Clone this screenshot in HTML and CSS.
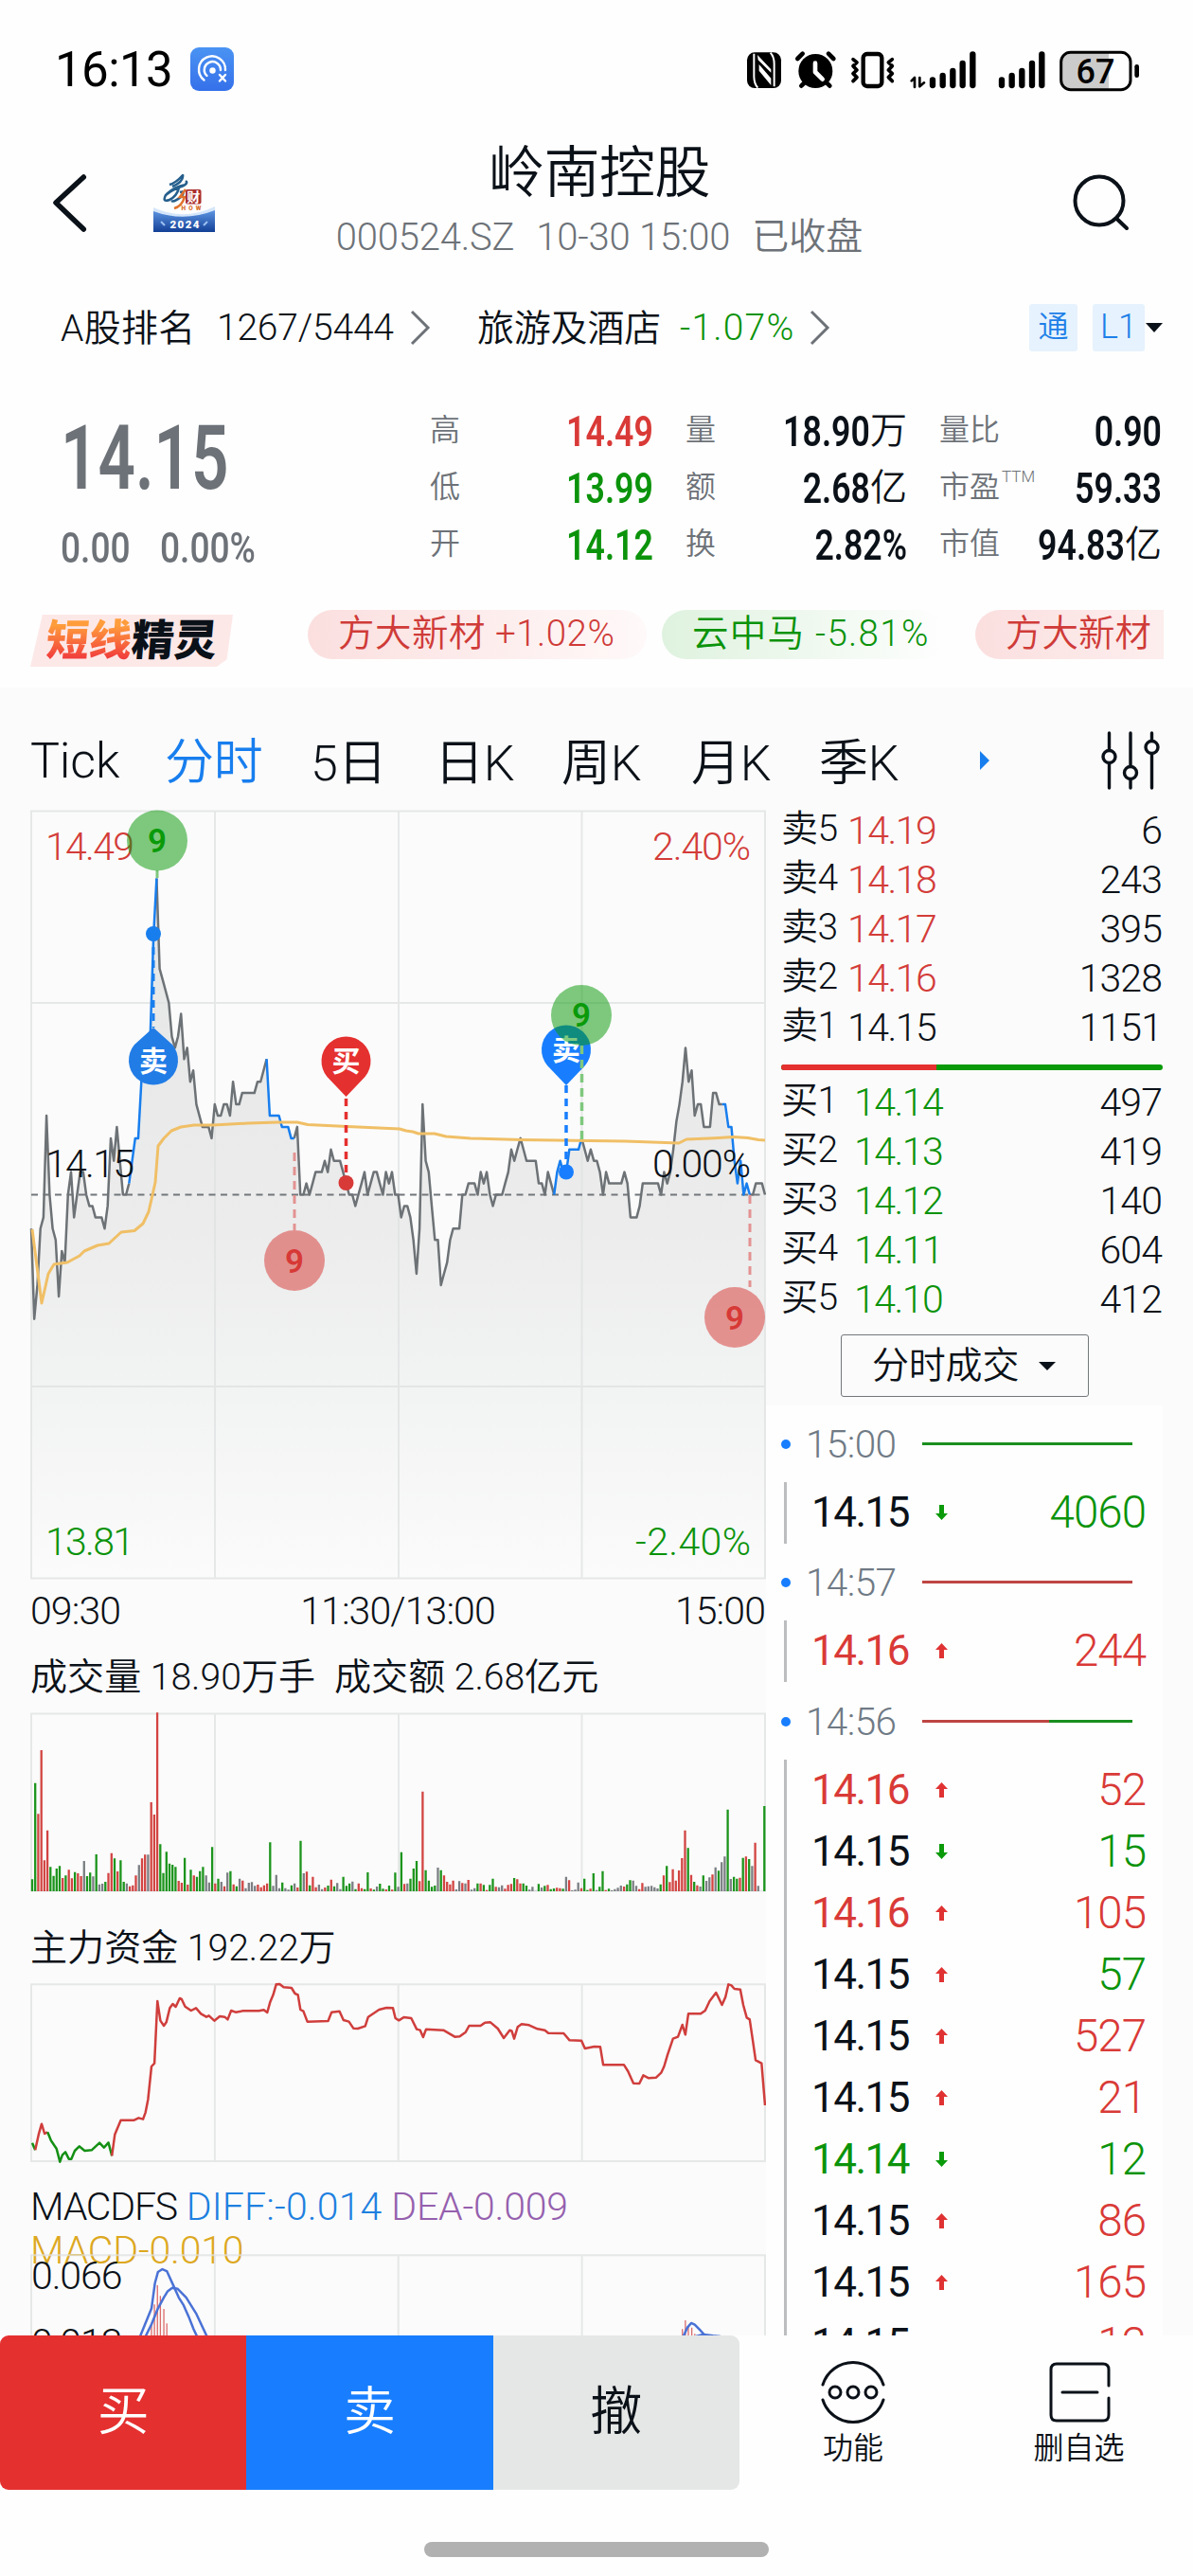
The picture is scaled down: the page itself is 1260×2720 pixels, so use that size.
FILE: index.html
```html
<!DOCTYPE html>
<html lang="zh-CN">
<head>
<meta charset="utf-8">
<title>岭南控股 000524.SZ</title>
<link rel="stylesheet" href="styles.css">
</head>
<body>
<div class="screen">
  <header class="status">
    <div class="status-left">
      <span class="clock">16:13</span>
      <svg class="cast" viewBox="0 0 46 46">
        <defs><linearGradient id="castbg" x1="0" y1="0" x2="0" y2="1"><stop offset="0" stop-color="#4a93f3"/><stop offset="1" stop-color="#3570ea"/></linearGradient></defs>
        <rect width="46" height="46" rx="9" fill="url(#castbg)"/>
        <g fill="none" stroke="#fff" stroke-width="2.4" stroke-linecap="round">
          <path d="M14.5 34.5A14 14 0 1 1 37 24"/>
          <path d="M17.5 30A8.6 8.6 0 1 1 32 24"/>
          <path d="M31 29l6 6.500M37 29l-6 6.500"/>
        </g>
        <circle cx="23.500" cy="24.500" r="3.200" fill="#fff"/>
      </svg>
    </div>
    <svg class="status-icons" viewBox="0 0 1320 210">
      <rect x="27" y="46" width="108" height="113" rx="24"/>
      <path d="M49 50V122Q49 144 61 158M113 154V82Q113 60 101 47" fill="none" stroke="#fefefe" stroke-width="6"/>
      <path d="M60 54L103 100V110L62 70ZM65 84L103 128V150L65 104Z" fill="#fefefe"/>
      <circle cx="244" cy="105" r="54"/>
      <path d="M187 66L203 50M301 66L285 50" stroke="#000" stroke-width="14" stroke-linecap="round"/>
      <path d="M199 152L212 139M289 152L276 139" stroke="#000" stroke-width="14" stroke-linecap="round"/>
      <path d="M243 80V108L266 131" fill="none" stroke="#fefefe" stroke-width="14" stroke-linecap="round" stroke-linejoin="round"/>
      <rect x="395" y="51" width="59" height="102" rx="12" fill="none" stroke="#000" stroke-width="13"/>
      <path d="M363 68L375 78L363 89L375 102L363 113L375 125L363 137M487 68L475 78L487 89L475 102L487 113L475 125L487 137" fill="none" stroke="#000" stroke-width="11" stroke-linecap="round" stroke-linejoin="round"/>
      <path d="M548 136L558 126V156M574 126V154L588 142" fill="none" stroke="#000" stroke-width="8" stroke-linecap="round" stroke-linejoin="round"/>
      <path d="M615 133V150M647 120V150M679 105V150M710 81V150M742 52V150M834 133V150M866 120V150M898 105V150M930 81V150M961 52V150" stroke="#000" stroke-width="19" stroke-linecap="round"/>
      <path d="M1052 46H1173V164H1052Q1022 164 1022 134V76Q1022 46 1052 46Z" fill="#cbcbcb"/>
      <rect x="1022" y="46" width="220" height="118" rx="30" fill="none" stroke="#000" stroke-width="9"/>
      <path d="M1262 91V119" stroke="#000" stroke-width="14" stroke-linecap="round"/>
      <text x="1131" y="143" text-anchor="middle" font-size="108" font-weight="500">67</text>
    </svg>
  </header>

  <div class="titlebar">
    <svg class="back" viewBox="0 0 40 64"><path d="M34.300 5L5 32L34.300 60" fill="none" stroke="#0b1118" stroke-width="5.500" stroke-linecap="round" stroke-linejoin="round"/></svg>
    <svg class="logo" viewBox="0 0 65 61">
      <defs><linearGradient id="lg" x1="0" y1="0" x2="0" y2="1"><stop offset="0" stop-color="#5e95e2"/><stop offset="1" stop-color="#123f96"/></linearGradient></defs>
      <path d="M0 35Q32 50 65 34V61H0Z" fill="#d5e6fa"/>
      <path d="M0 39Q32 51 65 38V61H0Z" fill="url(#lg)"/>
      <path d="M17 11Q24 9 31 1Q32 8 20 13M14 21Q22 13 34 11M34 7Q37 9 32 12Q20 16 13 22Q9 30 17 27Q25 23 27 14M28 19Q34 17 30 23Q22 30 19 28" fill="none" stroke="#255f8d" stroke-width="2.600"/>
      <path d="M34 16L28 24H33Q30 34 22 36" fill="none" stroke="#e0722c" stroke-width="2.600"/>
      <rect x="34" y="16" width="16.500" height="15.500" rx="2" fill="#a92f2d"/>
      <text x="42.200" y="29" text-anchor="middle" font-size="14" fill="#fff">财</text>
      <text x="40" y="37.500" text-anchor="middle" font-size="6.500" font-weight="900" fill="#d8702e" textLength="21">HOW</text>
      <text x="33" y="56.500" text-anchor="middle" font-size="11.500" font-weight="900" fill="#fff" textLength="31">2024</text>
      <path d="M8 50l4 4M57 50l-4 4" stroke="#9bc0f2" stroke-width="2"/>
    </svg>
    <div class="heading">
      <h1>岭南控股</h1>
      <p><span>000524.SZ</span><span>10-30 15:00</span><span class="closed">已收盘</span></p>
    </div>
    <svg class="search" viewBox="0 0 64 64"><g fill="none" stroke="#0b1118" stroke-width="4" stroke-linecap="round"><circle cx="30" cy="30" r="25.500"/><path d="M48.500 49L59 59"/></g></svg>
  </div>

  <div class="ranks">
    <span class="rank-label">A股排名</span><span class="rank-no">1267/5444</span>
    <svg class="chev" viewBox="0 0 22 38"><path d="M2 2L19 19L2 36"/></svg>
    <span class="sector">旅游及酒店</span><span class="rank-chg">-1.07%</span>
    <svg class="chev" viewBox="0 0 22 38"><path d="M2 2L19 19L2 36"/></svg>
    <span class="tag">通</span><span class="tag level">L1</span><i class="caret"></i>
  </div>

  <section class="quote">
    <div class="last">
      <div class="price">14.15</div>
      <div class="change"><span>0.00</span><span>0.00%</span></div>
    </div>
    <dl class="stats">
      <div><dt>高</dt><dd class="up"><b>14.49</b></dd></div>
      <div><dt>量</dt><dd><b>18.90</b>万</dd></div>
      <div><dt>量比</dt><dd><b>0.90</b></dd></div>
      <div><dt>低</dt><dd class="down"><b>13.99</b></dd></div>
      <div><dt>额</dt><dd><b>2.68</b>亿</dd></div>
      <div><dt>市盈<sup>TTM</sup></dt><dd><b>59.33</b></dd></div>
      <div><dt>开</dt><dd class="down"><b>14.12</b></dd></div>
      <div><dt>换</dt><dd><b>2.82%</b></dd></div>
      <div><dt>市值</dt><dd><b>94.83</b>亿</dd></div>
    </dl>
  </section>

  <div class="ticker">
    <div class="badge"><span class="hot">短线</span><span>精灵</span></div>
    <div class="pills">
      <span class="pill red">方大新材 +1.02%</span>
      <span class="pill green">云中马 -5.81%</span>
      <span class="pill red cut">方大新材</span>
    </div>
  </div>

  <main class="board">
    <nav class="tabs">
      <span class="t1">Tick</span><span class="t2 on">分时</span><span class="t3">5日</span><span class="t4">日K</span><span class="t5">周K</span><span class="t6">月K</span><span class="t7">季K</span><i class="more"></i>
      <svg class="sliders" viewBox="0 0 62 62"><g fill="none" stroke="#0b1118" stroke-width="3.400" stroke-linecap="round"><path d="M8.500 2V20M8.500 34V60M31 2V37M31 51V60M53.500 2V10M53.500 24V60"/><circle cx="8.500" cy="27" r="6.500"/><circle cx="31" cy="44" r="6.500"/><circle cx="53.500" cy="17" r="6.500"/></g></svg>
    </nav>
    <div class="columns">
      <div class="charts">
        <svg class="chart price-chart" viewBox="0 0 775 811">
          <defs><linearGradient id="fill" gradientUnits="userSpaceOnUse" x1="0" y1="70" x2="0" y2="811"><stop offset="0" stop-color="#e5e6e6"/><stop offset=".5" stop-color="#ececec"/><stop offset=".7" stop-color="#f1f2f2"/><stop offset="1" stop-color="#fbfbfb"/></linearGradient></defs>
          <path id="area" fill="url(#fill)"/>
          <path class="grid" d="M0 .500H775V810.500H0ZM194 0V811M388 0V811M581.500 0V811M0 203H775M0 608H775"/>
          <path d="M0 405.500H775" stroke="#72777b" stroke-width="2" stroke-dasharray="7 5.500"/>
          <path id="line" class="stroke" stroke="#6d7276"/>
          <path id="hot" class="stroke" stroke="#187eee"/>
          <polyline class="stroke" stroke="#f0bf66" stroke-width="3" points="1,442 11,520 18,489 24,479 38,477 51,470 56,465 70,459 82,457 95,445 109,443.500 118,436 124,423.500 131,392.500 134,354 140,346 148,338 158,334 172,332 192,332 229,330 260,329 281,329 292,331.500 334,333.500 389,336 396,338 403,339 409,341 426,341 438,344 464,346 517,347.500 627,349 684,351 692,347 716,346 742,344.500 757,345.500 768,347.500 775,348"/>
          <g font-size="41">
            <text x="15" y="52" fill="#d33c39" textLength="94">14.49</text><text x="760" y="52" fill="#d33c39" text-anchor="end" textLength="104">2.40%</text>
            <text x="15" y="387" fill="#0b1118" textLength="94">14.15</text><text x="760" y="387" fill="#0b1118" text-anchor="end" textLength="104">0.00%</text>
            <text x="15" y="786" fill="#0b930b" textLength="94">13.81</text><text x="760" y="786" fill="#0b930b" text-anchor="end" textLength="122">-2.40%</text>
          </g>
          <path d="M129 130V229" stroke="#187eee" stroke-width="3" stroke-dasharray="8 6"/>
          <path d="M332.500 302V388" stroke="#e53030" stroke-width="3.500" stroke-dasharray="8 6" stroke-dashoffset="-2"/>
          <path d="M565 290V380" stroke="#187eff" stroke-width="3.500" stroke-dasharray="8 6"/>
          <circle cx="129" cy="130" r="8" fill="#187eee"/><circle cx="332.500" cy="393" r="8" fill="#d83a38"/><circle cx="565" cy="381.500" r="8" fill="#187eff"/>
          <g class="pin">
            <path d="M129 229L149 247A26 26 0 1 1 109 247Z" fill="#217ce6"/><text x="129" y="275">卖</text>
            <path d="M332.500 302L352.500 281A26 26 0 1 0 312.500 281Z" fill="#e53030"/><text x="332.500" y="275">买</text>
            <path d="M565 290L585 269A26 26 0 1 0 545 269Z" fill="#187eff"/><text x="565" y="263">卖</text>
          </g>
          <g stroke="#e39291" stroke-width="3" stroke-dasharray="9 6"><path d="M278 361V443M759 406V503"/></g>
          <path d="M581.500 248V353" stroke="#7fc87e" stroke-width="3.500" stroke-dasharray="9 6"/><path d="M133 63V71" stroke="#7fc87e" stroke-width="3"/>
          <g class="nine">
            <g fill="#0a9a0a"><circle cx="133" cy="31.500" r="32"/><circle cx="581" cy="216" r="32"/><text x="133" y="44">9</text><text x="581" y="228">9</text></g>
            <g fill="#d73936"><circle cx="278" cy="475" r="32"/><circle cx="743" cy="535" r="32"/><text x="278" y="488">9</text><text x="743" y="548">9</text></g>
          </g>
        </svg>
        <div class="axis"><span>09:30</span><span>11:30/13:00</span><span>15:00</span></div>
        <div class="cap vol-cap"><span>成交量 18.90万手</span><span>成交额 2.68亿元</span></div>
        <svg class="chart vol-chart" viewBox="0 0 775 188">
          <path class="grid" d="M0 .500H775V187.500H0ZM194 0V188M388 0V188M581.500 0V188"/>
          <path id="bar-k" stroke="#7b7f83" stroke-width="2.300"/><path id="bar-r" stroke="#d24442" stroke-width="2.300"/><path id="bar-g" stroke="#1c941c" stroke-width="2.300"/>
        </svg>
        <div class="cap fund-cap">主力资金 192.22万</div>
        <svg class="chart fund-chart" viewBox="62 224 1483 561" preserveAspectRatio="none">
          <path class="grid" d="M62 225H1545V785H62ZM433 224V785M804 224V785M1175 224V785"/>
          <g class="stroke wide">
            <polyline stroke="#149014" points="64,727 70,750"/>
            <polyline stroke="#cf3e3c" points="70,750 77,700 83,667 89,698 95,693"/>
            <polyline stroke="#149014" points="95,693 102,720 113,745 120,787 125,765 131,756 138,778 143,778 150,752 159,738 170,752 184,750 200,727 209,742 218,726 225,768"/>
            <polyline stroke="#cf3e3c" points="225,768 231,700 243,655 270,655 279,648 288,652 293,630 298,590 305,485 311,475 317,278 323,340 330,356 335,345 342,300 348,287 354,296 362,269 366,272 373,295 385,308 395,300 405,318 416,328 421,324 432,340 443,326 453,328 459,336 466,308 475,313 490,309 522,309 532,306 539,314 545,280 551,258 557,225 564,224 572,234 588,236 595,254 601,258 606,305 612,310 620,343 662,341 669,313 685,310 693,338 704,343 713,364 722,365 737,357 743,328 765,305 780,299 793,300 798,332 805,339 815,329 830,332 841,367 848,370 854,392 860,367 895,370 918,391 928,390 940,376 947,356 970,356 979,346 990,345 1005,365 1017,395 1029,370 1033,372 1038,397 1045,360 1053,351 1068,354 1085,366 1100,370 1107,379 1138,380 1150,402 1174,403 1181,428 1200,422 1212,423 1218,480 1260,480 1268,500 1279,538 1291,539 1299,513 1310,522 1325,520 1335,505 1341,485 1348,448 1359,397 1369,391 1378,353 1384,384 1390,318 1415,318 1424,308 1433,278 1446,251 1452,270 1458,290 1465,265 1471,225 1477,228 1483,239 1495,241 1501,290 1508,330 1514,336 1520,400 1526,465 1538,475 1545,608"/>
          </g>
        </svg>
        <div class="macd-cap"><span>MACDFS</span> <span class="diff">DIFF:-0.014</span> <span class="dea">DEA-0.009</span><br><span class="macd">MACD-0.010</span></div>
        <div class="macd-box">
          <svg class="chart macd-chart" viewBox="62 271 1483 257" preserveAspectRatio="none">
            <path class="grid" d="M62 540V272H1545V540M433 271V540M804 271V540M1175 271V540"/>
            <path class="thin" stroke="#dd6b6b" d="M305 528V488M311 528V427M317 528V367M323 528V400M330 528V441M336 528V487M1378 528V505M1384 528V477M1390 528V495M1397 528V500M1403 528V520"/>
            <g class="stroke wide" stroke="#4a72d6">
              <polyline points="282,528 305,440 312,360 318,325 327,316 336,322 350,370 360,405 370,430 380,465 390,505 397,528"/>
              <polyline points="293,528 305,490 318,440 330,405 338,385 347,375 358,378 375,405 395,455 417,528"/>
              <polyline points="1380,528 1388,500 1396,486 1403,491 1412,505 1422,522 1428,528"/>
              <polyline points="1405,528 1420,522 1440,526 1455,528"/>
            </g>
          </svg>
          <span class="macd-top">0.066</span><span class="macd-mid">0.013</span>
        </div>
      </div>

      <aside class="side">
        <div class="book">
          <div class="lv up"><span>卖5</span><span>14.19</span><span>6</span></div>
          <div class="lv up"><span>卖4</span><span>14.18</span><span>243</span></div>
          <div class="lv up"><span>卖3</span><span>14.17</span><span>395</span></div>
          <div class="lv up"><span>卖2</span><span>14.16</span><span>1328</span></div>
          <div class="lv"><span>卖1</span><span>14.15</span><span>1151</span></div>
          <div class="ratio"><i></i></div>
          <div class="lv buy down"><span>买1</span><span>14.14</span><span>497</span></div>
          <div class="lv buy down"><span>买2</span><span>14.13</span><span>419</span></div>
          <div class="lv buy down"><span>买3</span><span>14.12</span><span>140</span></div>
          <div class="lv buy down"><span>买4</span><span>14.11</span><span>604</span></div>
          <div class="lv buy down"><span>买5</span><span>14.10</span><span>412</span></div>
        </div>
        <div class="select"><span>分时成交</span><i class="caret"></i></div>
        <div class="trades" id="trades"></div>
      </aside>
    </div>
  </main>

  <footer class="actions">
    <div class="btns"><button class="b-buy">买</button><button class="b-sell">卖</button><button class="b-undo">撤</button></div>
    <div class="act act-fn">
      <svg viewBox="0 0 70 72"><g fill="none" stroke="#0b1118" stroke-width="3" stroke-linecap="round"><path d="M3 28A33.500 33.500 0 0 1 67 28M3 44A33.500 33.500 0 0 0 67 44"/><circle cx="16" cy="36" r="6"/><circle cx="35" cy="36" r="6"/><circle cx="54" cy="36" r="6"/></g></svg>
      <span>功能</span>
    </div>
    <div class="act act-del">
      <svg viewBox="0 0 70 72"><g fill="none" stroke="#0b1118" stroke-width="3" stroke-linecap="round"><path d="M66 29V12Q66 6 60 6H11Q5 6 5 12V60Q5 66 11 66H60Q66 66 66 60V42M17 36H54"/></g></svg>
      <span>删自选</span>
    </div>
  </footer>
  <div class="home"></div>
</div>
<script src="app.js"></script>
</body>
</html>
```
FILE: styles.css
```css
* { box-sizing: border-box; }
body {
  margin: 0;
  background: #fefefe;
  color: #0b1118;
  font-family: Roboto, "Noto Sans CJK SC", sans-serif;
  font-weight: 350;
}
h1, p, dl, dd, dt { margin: 0; font-weight: inherit; }
.screen { width: 1260px; height: 2720px; overflow: hidden; display: flex; flex-direction: column; }
.up { color: #d93a37; }
.down { color: #0b930b; }

/* status bar */
.status { height: 146px; padding: 0 40px 0 58px; display: flex; justify-content: space-between; }
.status-left { display: flex; align-items: center; gap: 19px; color: #000; }
.clock { width: 124px; font-size: 51px; font-weight: 400; letter-spacing: -.6px; white-space: nowrap; }
.cast { width: 46px; height: 46px; }
.status-icons { width: 440px; height: 70px; margin-top: 40px; }

/* title */
.titlebar { height: 148px; padding-left: 54px; display: flex; align-items: flex-start; }
.back { width: 40px; height: 64px; margin-top: 36px; }
.logo { width: 65px; height: 61px; margin: 38px 0 0 68px; font-weight: 700; }
.heading { width: 812px; padding: 2px 0 0; text-align: center; }
.heading h1 { font-size: 59px; line-height: 70px; letter-spacing: -.5px; }
.heading p { display: flex; justify-content: center; gap: 23px; font-size: 40px; letter-spacing: -.2px; line-height: 60px; margin-top: 3px; color: #6d7278; }
.heading .closed { font-size: 39px; letter-spacing: 0; line-height: 58px; }
.search { width: 64px; height: 64px; margin: 36px 0 0 92px; }

/* rank row */
.ranks { height: 104px; padding: 0 32px 0 64px; display: flex; align-items: center; font-size: 39px; white-space: nowrap; }
.rank-label { width: 165px; padding-bottom: 6px; letter-spacing: .3px; }
.rank-no { width: 204px; letter-spacing: -.2px; }
.sector { width: 214px; margin-left: 49px; padding-bottom: 6px; letter-spacing: -.2px; }
.rank-chg { width: 137px; letter-spacing: 1.2px; color: #0b930b; }
.chev { width: 22px; height: 38px; }
.chev path { fill: none; stroke: #6d7278; stroke-width: 3; }
.tag { width: 51px; height: 50px; margin-left: auto; background: #e6f2fd; color: #1e80e8; border-radius: 3px; font-size: 32px; line-height: 48px; text-align: center; }
.level { width: 55px; margin-left: 16px; font-size: 36px; }
.caret { border: 9.5px solid transparent; border-bottom: 0; border-top: 10px solid #0b1118; }
.ranks .caret { margin-left: 1px; }

/* quote */
.quote { height: 230px; display: flex; padding-left: 64px; color: #0b1118; }
.last { width: 391px; color: #6d7278; }
.price { height: 134px; padding-top: 14px; font-size: 94px; font-weight: 600; line-height: 144px; transform: scaleX(.735); transform-origin: left; }
.change { display: flex; gap: 38px; font-size: 45px; line-height: 72px; font-weight: 500; transform: scaleX(.825); transform-origin: left; margin-top: 11px; }
.stats { display: grid; grid-template-columns: 236px 234px 235px; column-gap: 34px; grid-auto-rows: 60px; padding-top: 27px; margin-left: -1px; }
.stats div { display: flex; justify-content: space-between; align-items: center; white-space: nowrap; line-height: 60px; }
.stats dt { font-size: 32px; color: #6d7278; padding-bottom: 2px; }
.stats sup { font-size: 17px; line-height: 0; vertical-align: 16px; margin-left: 2px; }
.stats dd { display: flex; align-items: center; justify-content: flex-end; font-size: 39px; width: 110px; }
.stats b { font-weight: 600; font-size: 43.5px; padding-top: 3px; transform: scaleX(.82); transform-origin: right; }

/* ticker */
.ticker { height: 98px; display: flex; align-items: flex-start; padding: 16px 31px 0 32px; }
.badge { width: 214px; height: 55px; margin-top: 5px; padding-left: 17px; background: #fde8e8; clip-path: polygon(6% 0, 100% 0, 97% 86%, 92% 100%, 0 100%); font-size: 45px; font-weight: 900; line-height: 56px; white-space: nowrap; }
.badge span { display: inline-block; transform: skewX(-5deg); }
.badge .hot { background: linear-gradient(#ff9d3c 20%, #f0383c 85%); -webkit-background-clip: text; background-clip: text; color: transparent; }
.pills { flex: 1; display: flex; margin-left: 79px; overflow: hidden; }
.pill { flex: none; height: 52px; border-radius: 26px; padding-left: 32px; font-size: 38.5px; line-height: 50px; letter-spacing: .5px; white-space: nowrap; }
.pill.red { width: 358px; color: #cf3b38; background: linear-gradient(90deg, #fbdfdf, #fff9f9); }
.pill.green { width: 301px; margin: 0 30px 0 16px; letter-spacing: 1.3px; color: #0b930b; background: linear-gradient(90deg, #dff2df, #fefefe); }
.pill.red.cut { width: 200px; letter-spacing: 0; border-radius: 26px 0 0 26px; background: linear-gradient(90deg, #fbdfdf, #fdeeee); }

/* board */
.board { height: 1740px; overflow: hidden; background: #fbfbfb; }
.tabs { height: 130px; padding: 24px 35px 0 32px; display: flex; align-items: center; font-size: 52px; white-space: nowrap; }
.tabs span { letter-spacing: -.2px; padding-bottom: 3px; }
.tabs .t1 { padding-bottom: 0; }
.tabs .on { color: #187eee; padding-bottom: 6px; }
.t1 { width: 142px; }
.t2 { width: 154px; }
.t3 { width: 131px; }
.t4 { width: 134px; }
.t5 { width: 137px; }
.t6 { width: 135px; }
.t7 { width: 170px; }
.more { border: 10px solid transparent; border-right: 0; border-left: 10px solid #187eee; }
.sliders { width: 62px; height: 62px; margin-left: auto; }
.columns { display: flex; padding-left: 33px; gap: 1px; }
.charts { width: 775px; }
.chart { display: block; width: 775px; overflow: visible; }
.grid { fill: none; stroke: #dfe1e1; stroke-opacity: .75; stroke-width: 2; vector-effect: non-scaling-stroke; }
.stroke { fill: none; stroke-width: 2.5; stroke-linejoin: round; }
polyline.stroke { stroke-width: 3; }
.wide polyline { vector-effect: non-scaling-stroke; }
.thin { stroke-width: 1.3; vector-effect: non-scaling-stroke; }
.price-chart { height: 811px; }
.pin text { font-size: 30px; font-weight: 700; fill: #fff; text-anchor: middle; }
.nine circle { opacity: .52; }
.nine text { font-size: 35px; font-weight: 600; text-anchor: middle; }
.axis { height: 66px; margin: 0 0 0 -1px; display: flex; justify-content: space-between; align-items: center; font-size: 41px; letter-spacing: -.9px; padding-top: 2px; }
.cap { font-size: 39.1px; white-space: pre; display: flex; align-items: center; margin-left: -1px; }
.vol-cap { height: 76px; padding-bottom: 8px; gap: 20px; }
.vol-chart { height: 188px; }
.fund-cap { height: 98px; padding-top: 14px; }
.fund-chart { height: 187px; }
.macd-cap { height: 98.5px; padding-top: 25px; margin-left: -1px; font-size: 41px; line-height: 46px; letter-spacing: -.2px; white-space: nowrap; position: relative; }
.macd-cap span:first-child { letter-spacing: -1.2px; }
.diff { color: #1e80e0; letter-spacing: .15px; }
.dea { color: #9560ae; }
.macd { color: #dda81f; }
.macd-box { position: relative; font-size: 41px; letter-spacing: -1.1px; line-height: 46px; }
.macd-chart { height: 86px; }
.macd-top { position: absolute; left: 0; top: -1px; }
.macd-mid { position: absolute; left: 0; top: 70px; }

/* order book */
.side { width: 419px; margin-top: -5px; }
.book { padding-left: 17px; }
.lv { height: 52px; display: grid; grid-template-columns: 70px 1fr auto; align-items: center; font-size: 41px; line-height: 48px; letter-spacing: -1.5px; color: #0b1118; padding-bottom: 1px; margin-left: -1px; }
.lv.buy { grid-template-columns: 77px 1fr auto; }
.lv span:first-child { font-size: 39px; letter-spacing: -.6px; line-height: 44px; padding-bottom: 4px; }
.lv span:last-child { letter-spacing: -.9px; padding-right: 1px; }
.lv.up span:nth-child(2) { color: #d33c39; }
.lv.down span:nth-child(2) { color: #0b930b; }
.ratio { height: 6px; margin: 13px 0 8.500px -1px; border-radius: 3px; background: #089a08; overflow: hidden; }
.ratio i { display: block; width: 164px; height: 6px; background: #e53030; }
.select { width: 262px; height: 66px; margin: 10.500px 0 9px 79px; border: 1.500px solid #72777b; border-radius: 3px; display: flex; align-items: center; padding-left: 32px; gap: 21px; font-size: 39px; letter-spacing: -.2px; }
.select span { padding-bottom: 8px; }
.select .caret { border-top-width: 9px; }
.trades { height: 1000px; background: #fefefe; }
.minute { height: 81px; padding: 0 32px 0 16px; display: flex; align-items: center; font-size: 40.5px; letter-spacing: -.6px; color: #6f7a85; }
.minute:nth-of-type(5) { margin-top: 1px; }
.minute::before { content: ""; width: 10px; height: 10px; margin-right: 16px; border-radius: 50%; background: #187eff; }
.minute span { width: 123px; }
.minute .flow { flex: 1; height: 3px; display: flex; background: #1a8f1f; }
.flow i { background: #bd4643; }
.trade { height: 65px; margin-left: 19px; border-left: 3px solid #bbbdbf; padding: 0 18px 1px 26px; display: flex; align-items: center; letter-spacing: -1px; }
.trade .p { width: 131px; font-size: 44px; font-weight: 400; letter-spacing: -1.5px; }
.trade svg { width: 13px; height: 16px; }
.trade .v { margin-left: auto; font-size: 47.5px; }

/* bottom bar */
.actions { height: 163px; display: flex; background: #fefefe; }
.btns { width: 781px; display: flex; border-radius: 9px; overflow: hidden; }
.btns button { flex: 1; border: 0; padding: 0 0 14px; font: 350 55px Roboto, "Noto Sans CJK SC", sans-serif; color: #fff; }
.b-buy { background: #e53030; }
.b-sell { background: #187eff; }
.btns .b-undo { background: #e5e7e6; color: #0b1118; }
.act { width: 240px; padding-top: 24px; display: flex; flex-direction: column; align-items: center; font-size: 32px; line-height: 46px; }
.act svg { width: 70px; height: 72px; }
.act-del { width: 237px; }
.home { width: 364px; height: 16px; margin: 55px 0 0 448px; border-radius: 8px; background: #b1b1b1; }
```
FILE: app.js
```js
// One-minute closes, in ticks of 0.01 from the previous close
const ticks = [
  -3,-11,-8,-3,-2,7,0,-3,-4,-9,-5,-6,0,2,-2,0,2,2,0,-1,-1,-2,-2,-2,-3,-1,5,3,6,3,
  0,0,1,3,5,5,10,11,13,14.5,23,28,20,19,18,17,14,13,14,16,12,13,10,11,8,7,6,6,6,5,
  8,7,7,8,8,7,10,8,8,9,9,9,9,9,10,10,11,12,7,7,7,7,6,6,6,5,5,6,0,0,
  1,0,1,2,2,2,3,2,4,3,3,3,2,1,0,0,-1,0,1,2,0,1,2,2,1,0,2,1,2,0,
  0,-2,-1,-1,-2,-4,-7,-3,8,3,2,-1,-4,-4,-8,-7,-6,-4,-3,-3,-3,0,0,1,1,1,0,2,1,2,
  0,-1,0,0,0,1,2,4,3,4,5,4,3,3,3,3,1,1,0,2,1,0,2,3,2,2,4,4,4,4,
  5,4,3,4,3,3,2,0,2,1,1,1,1,1,2,1,-2,-2,-2,-1,1,1,1,1,1,1,0,2,1,2,
  4,6.5,8,10,13,10,11,7,8,8,6,6,6,9,9,8,8,8,6,6,3,1,3,0,1,0,0,1,1,1,0
];
const step = 775 / 240;
const pt = i => (i * step).toFixed(1) + ' ' + (405.5 - ticks[i] * 11.93).toFixed(1);
const run = (a, b) => {
  let d = 'M' + pt(a);
  for (let i = a + 1; i <= b; i++) d += 'L' + pt(i);
  return d;
};
const set = (id, d) => document.getElementById(id).setAttribute('d', d);
set('area', run(0, 240) + 'V811H0Z');
set('line', run(0, 32) + run(41, 77) + run(86, 171) + run(180, 226) + run(235, 240));
set('hot', run(32, 41) + run(77, 86) + run(171, 180) + run(226, 235));

// Volume per minute: colour (g fall, r rise, k flat) and height
const volume = `g38 g343 r245 r447 r98 r193 g77 g49 g72 g80 r42 g50 r68 r41 g61 r57 r48 k96 g48 g59 k47 g117 k22 k24 g30 r58 r121 g104 r63 g98
g30 k25 r16 r19 r50 k83 r104 r116 k116 r282 r243 r566 g149 g58 g125 g88 g84 g77 r33 r27 g106 r21 g68 r50 g46 g64 g77 k50 k28 g140
r25 g40 k30 r16 k59 g64 r22 g16 k40 r34 k10 k27 k29 k17 r21 r13 r19 r25 g155 k17 k52 k10 g28 k10 k5 g19 k25 r12 g160 k57
r62 g19 r46 r13 k21 k7 r12 g18 r37 g16 k26 k7 g46 g17 g25 k31 g7 r25 r10 g7 g60 r9 g5 k15 g24 g8 r6 g18 r5 g59
k14 g124 r23 k25 g40 g72 g96 r32 r316 g67 g34 g14 g18 k75 g67 r50 r30 r22 r34 k6 k32 r26 k25 r36 k5 k10 g25 r25 g20 r4
g20 g40 r14 k13 k19 r8 r20 r23 g42 r38 r25 g25 g18 k5 k14 k1 g23 k12 g17 r20 g7 g9 r11 r10 g8 k46 r35 k3 k5 k28
r10 g40 g4 r8 g57 k4 g14 g64 r4 g8 k3 k7 k11 k18 r15 g22 g35 k34 k17 r7 r26 k14 k16 k17 k13 k9 g22 r50 g80 r29
r70 r34 r66 r105 r193 g137 r52 g30 r19 k15 g50 k33 k44 r53 k76 g65 k92 k110 g259 k39 g46 g40 r43 g106 r110 g102 k80 r154 k17 k0 g270`.split(/\s+/);
const paths = { g: '', r: '', k: '' };
volume.forEach((v, i) => {
  paths[v[0]] += 'M' + (1 + i * 3.222).toFixed(1) + ' 188v-' + (v.slice(1) / 3).toFixed(1);
});
for (const c in paths) set('bar-' + c, paths[c]);

// Time and sales
const feed = [
  ['15:00', 0, [['14.15', 'd', '4060', 'd']]],
  ['14:57', 100, [['14.16', 'u', '244', 'u']]],
  ['14:56', 60.5, [
    ['14.16', 'u', '52', 'u'], ['14.15', 'd', '15', 'd'], ['14.16', 'u', '105', 'u'],
    ['14.15', 'u', '57', 'd'], ['14.15', 'u', '527', 'u'], ['14.15', 'u', '21', 'u'],
    ['14.14', 'd', '12', 'd'], ['14.15', 'u', '86', 'u'], ['14.15', 'u', '165', 'u'], ['14.15', 'u', '12', 'u']
  ]]
];
const tone = { u: 'up', d: 'down' };
const arrow = {
  u: '<svg viewBox="0 0 13 16"><path d="M6.500 0L13 7H9V16H4V7H0Z" fill="#e03232"/></svg>',
  d: '<svg viewBox="0 0 13 16"><path d="M6.500 16L13 9H9V0H4V9H0Z" fill="#0a9a0a"/></svg>'
};
document.getElementById('trades').innerHTML = feed.map(([time, buy, rows]) =>
  `<div class="minute"><span>${time}</span><div class="flow"><i style="width:${buy}%"></i></div></div>` +
  rows.map(([p, dir, v, side]) => {
    const pc = p > '14.15' ? 'up' : p < '14.15' ? 'down' : '';
    return `<div class="trade"><span class="p ${pc}">${p}</span>${arrow[dir]}<span class="v ${tone[side]}">${v}</span></div>`;
  }).join('')
).join('');
```
